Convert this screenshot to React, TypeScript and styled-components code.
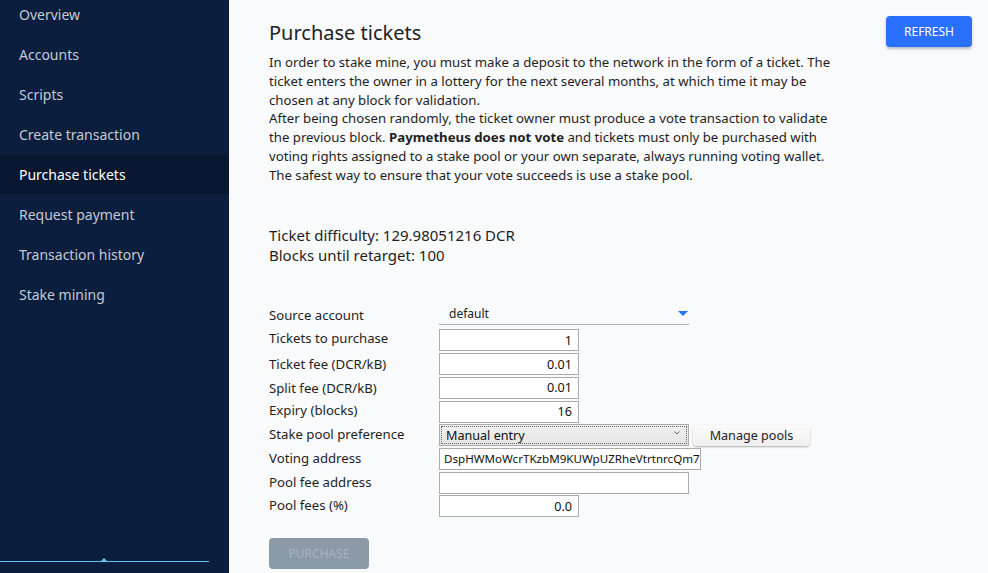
import React from "react";
import styled, { createGlobalStyle } from "styled-components";

const Global = createGlobalStyle`
  html, body { margin: 0; padding: 0; }
  body {
    background: #f9fafc;
    font-family: "Noto Sans", "Segoe UI", sans-serif;
    color: #1e1e1e;
  }
  * { box-sizing: border-box; }
`;

const Shell = styled.div`
  display: flex;
  width: 988px;
  height: 573px;
  overflow: hidden;
`;

const Sidebar = styled.nav`
  width: 229px;
  flex: none;
  background: #0c1e3e;
  display: flex;
  flex-direction: column;
  justify-content: space-between;
`;

const NavList = styled.div`
  display: flex;
  flex-direction: column;
  margin-top: -6px;
`;

const NavItem = styled.div<{ $active?: boolean }>`
  height: 40px;
  display: flex;
  align-items: center;
  padding-left: 19px;
  font-size: 14px;
  color: ${(p) => (p.$active ? "#ffffff" : "#c3c9d4")};
  background: ${(p) => (p.$active ? "#091730" : "transparent")};
`;

const BottomLine = styled.div`
  position: relative;
  width: 209px;
  height: 1.5px;
  background: #5ec5f2;
  margin-bottom: 11px;
  &::after {
    content: "";
    position: absolute;
    left: 101px;
    top: -3px;
    border-left: 3px solid transparent;
    border-right: 3px solid transparent;
    border-bottom: 3px solid #5ec5f2;
  }
`;

const Main = styled.main`
  flex: 1;
  padding: 16px 16px 0 40px;
  display: flex;
  flex-direction: column;
`;

const Header = styled.div`
  display: flex;
  justify-content: space-between;
  align-items: flex-start;
`;

const Title = styled.h1`
  margin: 3px 0 0 0;
  font-size: 20px;
  font-weight: 400;
  color: #222;
  line-height: 28px;
`;

const PrimaryButton = styled.button`
  width: 86px;
  height: 31px;
  border: none;
  border-radius: 4px;
  background: #2970ff;
  color: #fff;
  font-family: inherit;
  font-size: 12px;
  box-shadow: 0 2px 3px rgba(0, 0, 0, 0.25);
`;

const Intro = styled.p`
  margin: 6px 0 0 0;
  width: 575px;
  font-size: 13.2px;
  line-height: 18.75px;
  color: #1e1e1e;
  b { font-weight: 700; line-height: 18.75px; }
`;

const Stats = styled.div`
  margin-top: 41px;
  font-size: 15px;
  line-height: 20px;
  color: #1e1e1e;
`;

const Form = styled.div`
  margin-top: 39px;
  display: grid;
  grid-template-columns: 170px auto;
  row-gap: 1.7px;
  align-items: start;
  justify-items: start;
`;

const Label = styled.div<{ $top?: number }>`
  font-size: 13.2px;
  line-height: 18px;
  padding-top: ${(p) => p.$top ?? 0}px;
  color: #1e1e1e;
`;

const AccountSelect = styled.div`
  width: 250px;
  height: 21px;
  border-bottom: 1px solid #a9b0bb;
  display: flex;
  align-items: center;
  justify-content: space-between;
  padding: 0 1px 2px 10px;
  font-size: 12px;
  color: #222;
  margin-bottom: 2.5px;
`;

const BlueCaret = styled.span`
  width: 0;
  height: 0;
  border-left: 5px solid transparent;
  border-right: 5px solid transparent;
  border-top: 5px solid #2970ff;
`;

const Input = styled.div<{ $w: number; $left?: boolean; $small?: boolean }>`
  width: ${(p) => p.$w}px;
  height: 22px;
  border: 1px solid #acacac;
  background: #fff;
  display: flex;
  align-items: center;
  justify-content: ${(p) => (p.$left ? "flex-start" : "flex-end")};
  padding: 0 6px 0 4px;
  font-size: ${(p) => (p.$small ? "11.6px" : "12.6px")};
  color: #111;
  white-space: nowrap;
  overflow: hidden;
`;

const InlineRow = styled.div`
  display: flex;
  align-items: center;
  gap: 4px;
`;

const PoolSelect = styled.div`
  width: 250px;
  height: 22px;
  border: 1px solid #acacac;
  background: linear-gradient(#f0f0f0, #e5e5e5);
  padding: 1px;
  display: flex;
`;

const PoolSelectInner = styled.div`
  flex: 1;
  border: 1px dotted #666;
  display: flex;
  align-items: center;
  justify-content: space-between;
  padding: 0 6px 0 4px;
  font-size: 12.6px;
  color: #111;
`;

const Chevron = styled.svg`
  width: 6px;
  height: 4px;
  margin-top: -4px;
`;

const SecondaryButton = styled.button`
  width: 117px;
  height: 21px;
  border: none;
  border-radius: 4px;
  background: linear-gradient(#fbfbfb, #f0f0f0);
  box-shadow: 0 1px 2px rgba(0, 0, 0, 0.3);
  font-family: inherit;
  font-size: 12.6px;
  color: #222;
`;

const DisabledButton = styled.button`
  margin-top: 21px;
  width: 100px;
  height: 31px;
  border: none;
  border-radius: 4px;
  background: #8c99a6;
  color: #a9b4bf;
  font-family: inherit;
  font-size: 12px;
`;

const navItems = [
  "Overview",
  "Accounts",
  "Scripts",
  "Create transaction",
  "Purchase tickets",
  "Request payment",
  "Transaction history",
  "Stake mining",
];

export default function App() {
  return (
    <>
      <Global />
      <Shell>
        <Sidebar>
          <NavList>
            {navItems.map((n) => (
              <NavItem key={n} $active={n === "Purchase tickets"}>
                {n}
              </NavItem>
            ))}
          </NavList>
          <BottomLine />
        </Sidebar>
        <Main>
          <Header>
            <Title>Purchase tickets</Title>
            <PrimaryButton>REFRESH</PrimaryButton>
          </Header>
          <Intro>
            In order to stake mine, you must make a deposit to the network in the form of a
            ticket. The ticket enters the owner in a lottery for the next several months, at
            which time it may be chosen at any block for validation.
            <br />
            After being chosen randomly, the ticket owner must produce a vote transaction to
            validate the previous block. <b>Paymetheus does not vote</b> and tickets must only
            be purchased with voting rights assigned to a stake pool or your own separate,
            always running voting wallet. The safest way to ensure that your vote succeeds is
            use a stake pool.
          </Intro>
          <Stats>
            <div>Ticket difficulty: 129.98051216 DCR</div>
            <div>Blocks until retarget: 100</div>
          </Stats>
          <Form>
            <Label $top={2}>Source account</Label>
            <AccountSelect>
              <span>default</span>
              <BlueCaret />
            </AccountSelect>

            <Label>Tickets to purchase</Label>
            <Input $w={140}>1</Input>

            <Label $top={2}>Ticket fee (DCR/kB)</Label>
            <Input $w={140}>0.01</Input>

            <Label $top={2}>Split fee (DCR/kB)</Label>
            <Input $w={140}>0.01</Input>

            <Label>Expiry (blocks)</Label>
            <Input $w={140}>16</Input>

            <Label $top={1}>Stake pool preference</Label>
            <InlineRow>
              <PoolSelect>
                <PoolSelectInner>
                  <span>Manual entry</span>
                  <Chevron viewBox="0 0 6 4">
                    <path d="M0.5 0.5 L3 3 L5.5 0.5" stroke="#666" strokeWidth="1" fill="none" />
                  </Chevron>
                </PoolSelectInner>
              </PoolSelect>
              <SecondaryButton>Manage pools</SecondaryButton>
            </InlineRow>

            <Label $top={1}>Voting address</Label>
            <Input $w={262} $left $small>
              DspHWMoWcrTKzbM9KUWpUZRheVtrtnrcQm7
            </Input>

            <Label $top={1}>Pool fee address</Label>
            <Input $w={250} $left />

            <Label $top={1}>Pool fees (%)</Label>
            <Input $w={140}>0.0</Input>
          </Form>
          <DisabledButton>PURCHASE</DisabledButton>
        </Main>
      </Shell>
    </>
  );
}
